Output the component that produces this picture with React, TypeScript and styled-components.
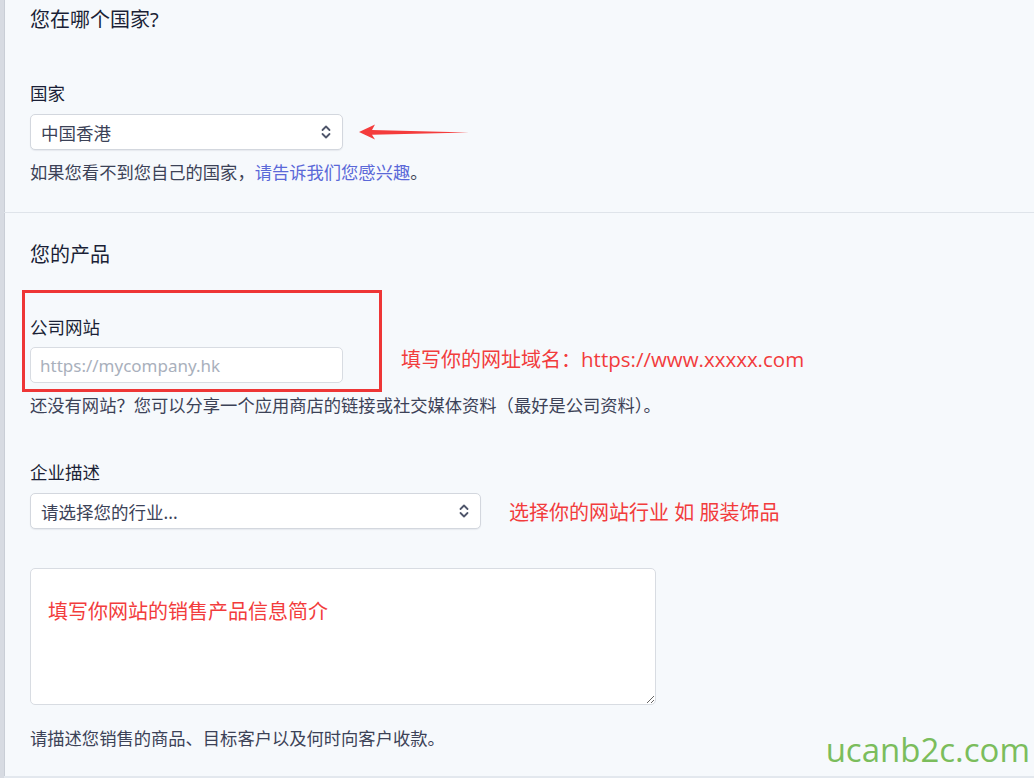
import React from "react";
import styled, { createGlobalStyle } from "styled-components";

const Global = createGlobalStyle`
  html, body { margin: 0; padding: 0; background: #f6f9fc; }
  body { font-family: "Noto Sans", "Noto Sans CJK SC", sans-serif; }
  * { box-sizing: border-box; }
`;

const Page = styled.div`
  position: relative;
  width: 1034px;
  height: 778px;
  overflow: hidden;
  background: #f6f9fc;
  border-left: 4px solid #d7dbe2;
  box-shadow: inset 1px 0 0 #c9ced6;
`;

const Section = styled.section<{ $top: number; $bottom: number; $divider?: boolean }>`
  padding: ${(p) => p.$top}px 0 ${(p) => p.$bottom}px 26px;
  border-bottom: ${(p) => (p.$divider ? "1px solid #dfe4ea" : "2px solid #e3e8ee")};
`;

const Heading = styled.h2<{ $mt: number }>`
  margin: ${(p) => p.$mt}px 0 0;
  font-size: 20px;
  line-height: 28px;
  font-weight: 400;
  color: #1a1f36;
`;

const Label = styled.div<{ $mt: number }>`
  margin-top: ${(p) => p.$mt}px;
  font-size: 17.5px;
  line-height: 24px;
  color: #1a1f36;
`;

const Hint = styled.div<{ $mt: number }>`
  margin-top: ${(p) => p.$mt}px;
  font-size: 17.3px;
  line-height: 24px;
  color: #3c4257;
`;

const Link = styled.span`
  color: #5a68d8;
`;

const Row = styled.div<{ $mt: number; $gap: number; $align?: string }>`
  display: flex;
  align-items: ${(p) => p.$align || "center"};
  gap: ${(p) => p.$gap}px;
  margin-top: ${(p) => p.$mt}px;
`;

const SelectBox = styled.div<{ $w: number }>`
  width: ${(p) => p.$w}px;
  height: 36px;
  display: flex;
  align-items: center;
  justify-content: space-between;
  padding: 0 10px 0 10px;
  background: #fff;
  border: 1px solid #d3d7de;
  border-radius: 5px;
  box-shadow: 0 1px 1px rgba(60, 66, 87, 0.08);
  font-size: 17.5px;
  color: #3c4257;
`;

const Input = styled.div`
  width: 313px;
  height: 36px;
  margin-top: 8px;
  display: flex;
  align-items: center;
  padding: 0 9px;
  background: #fff;
  border: 1px solid #d8dce2;
  border-radius: 5px;
  font-size: 17px;
  color: #a9b0bc;
`;

const RedFrame = styled.div`
  margin-left: -8px;
  width: 360px;
  border: 3px solid #ee3636;
  padding: 22px 5px 6px;
`;

const Note = styled.div<{ $mt?: number }>`
  margin-top: ${(p) => p.$mt || 0}px;
  font-size: 20px;
  color: #f23c3c;
  white-space: nowrap;
`;

const NoteLatin = styled.span`
  font-family: "Open Sans", sans-serif;
  font-size: 20.5px;
`;

const ArrowWrap = styled.div`
  display: flex;
  align-items: center;
`;

const TextArea = styled.textarea`
  display: block;
  margin-top: 39px;
  width: 626px;
  height: 137px;
  padding: 29px 17px;
  background: #fff;
  border: 1px solid #d8dce2;
  border-radius: 5px;
  font-family: "Noto Sans CJK SC", sans-serif;
  font-size: 20px;
  line-height: 26px;
  color: #f23c3c;
  resize: both;
  outline: none;
`;

const Watermark = styled.div`
  position: absolute;
  right: 4px;
  bottom: 6px;
  font-family: "Open Sans", sans-serif;
  font-size: 33px;
  color: #7bbd5c;
`;

const Chevron = () => (
  <svg width="12" height="16" viewBox="0 0 12 16" fill="none" stroke="#4f566b" strokeWidth="1.8" strokeLinecap="round" strokeLinejoin="round">
    <path d="M2.5 6 L6 2.5 L9.5 6" />
    <path d="M2.5 10 L6 13.5 L9.5 10" />
  </svg>
);

const Arrow = () => (
  <svg width="112" height="18" viewBox="0 0 112 18">
    <polygon points="0,9 16,1.5 13,7 110,9.6 13,11.8 16,16.5" fill="#f43c3c" />
  </svg>
);

export default function App() {
  return (
    <Page>
      <Global />
      <Section $top={0} $bottom={27} $divider>
        <Heading $mt={6}>您在哪个国家?</Heading>
        <Label $mt={47}>国家</Label>
        <Row $mt={9} $gap={16}>
          <SelectBox $w={313}>
            <span>中国香港</span>
            <Chevron />
          </SelectBox>
          <ArrowWrap>
            <Arrow />
          </ArrowWrap>
        </Row>
        <Hint $mt={11}>
          如果您看不到您自己的国家，<Link>请告诉我们您感兴趣</Link>。
        </Hint>
      </Section>
      <Section $top={28} $bottom={25}>
        <Heading $mt={0}>您的产品</Heading>
        <Row $mt={21} $gap={19} $align="flex-start">
          <RedFrame>
            <Label $mt={0}>公司网站</Label>
            <Input>https://mycompany.hk</Input>
          </RedFrame>
          <Note $mt={54}>
            填写你的网址域名：<NoteLatin>https://www.xxxxx.com</NoteLatin>
          </Note>
        </Row>
        <Hint $mt={2}>还没有网站？您可以分享一个应用商店的链接或社交媒体资料（最好是公司资料）。</Hint>
        <Label $mt={42}>企业描述</Label>
        <Row $mt={9} $gap={28}>
          <SelectBox $w={451}>
            <span>请选择您的行业...</span>
            <Chevron />
          </SelectBox>
          <Note>选择你的网站行业 如 服装饰品</Note>
        </Row>
        <TextArea defaultValue="填写你网站的销售产品信息简介" />
        <Hint $mt={22}>请描述您销售的商品、目标客户以及何时向客户收款。</Hint>
      </Section>
      <Watermark>ucanb2c.com</Watermark>
    </Page>
  );
}
